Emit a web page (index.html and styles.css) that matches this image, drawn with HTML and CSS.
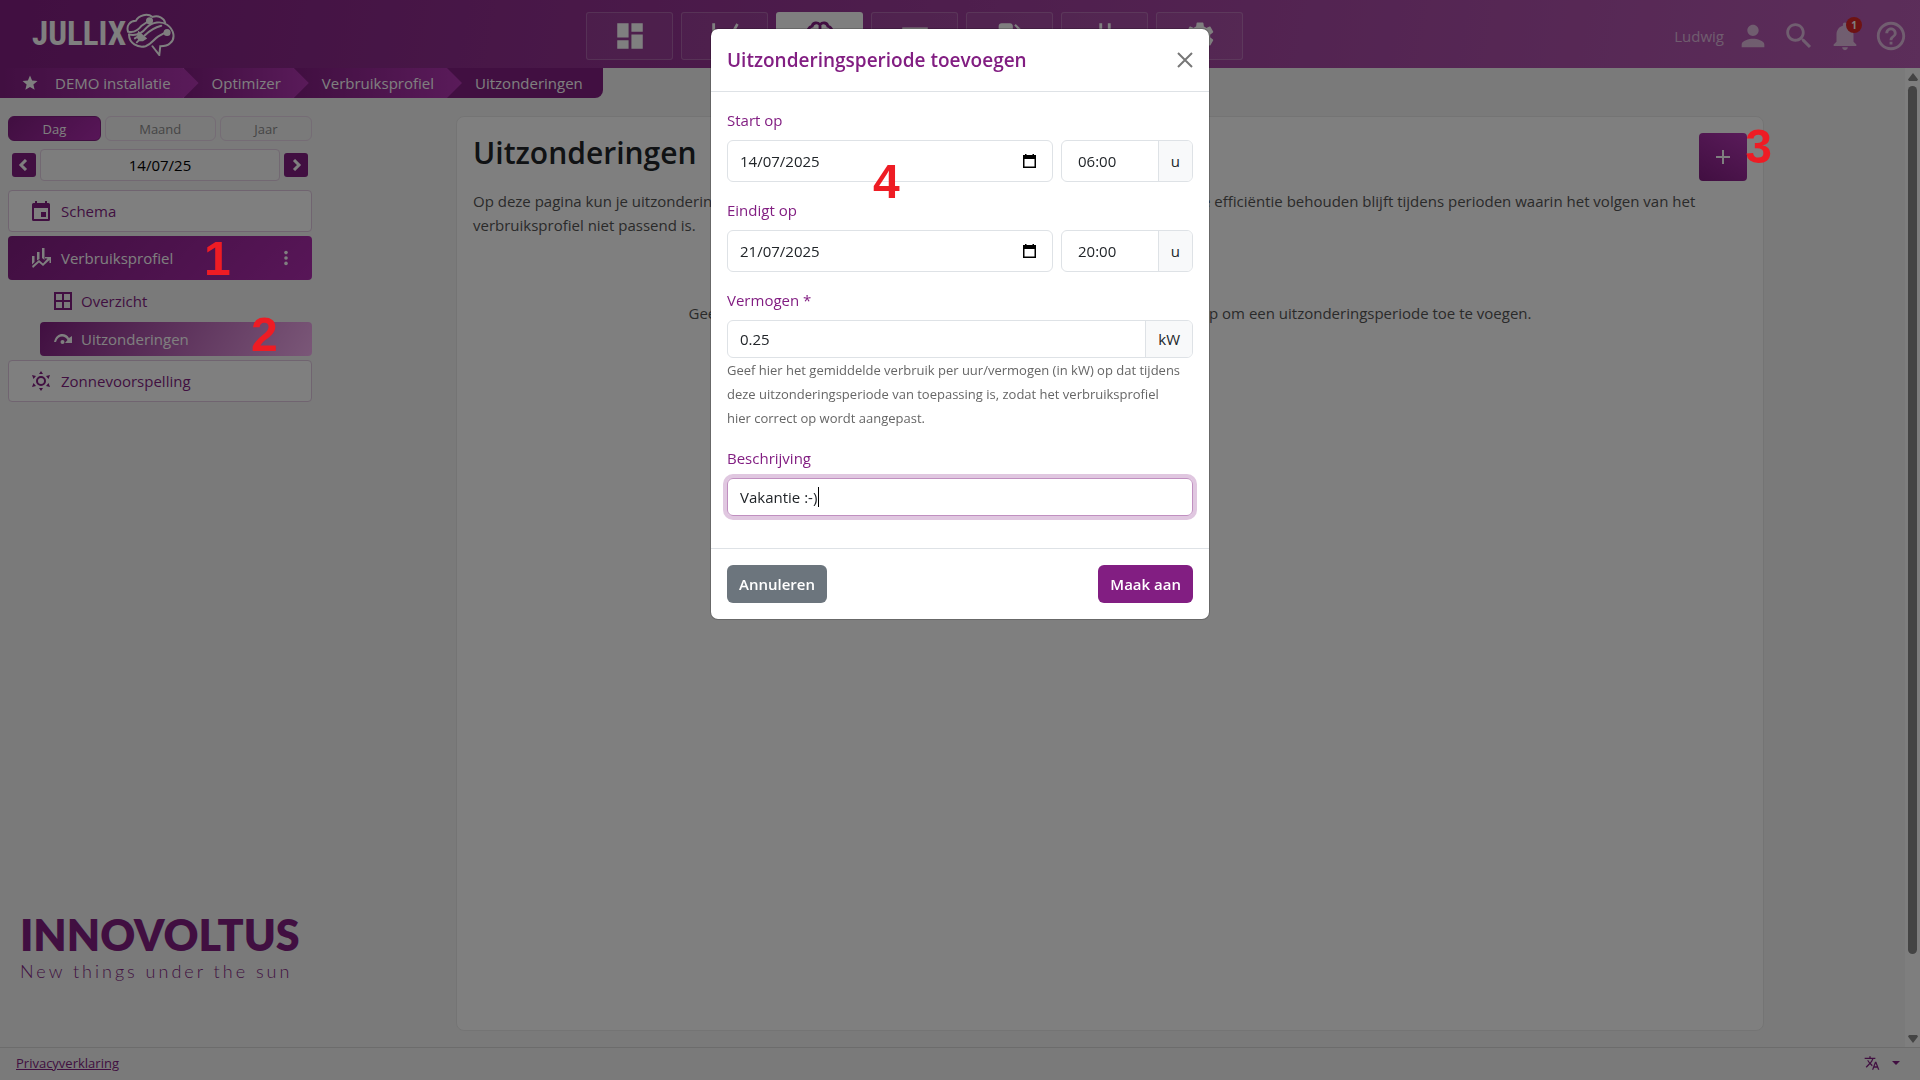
FILE: index.html
```html
<!DOCTYPE html>
<html lang="nl">
<head>
    <meta charset="UTF-8">
    <meta name="viewport" content="width=device-width, initial-scale=1.0">
    <title>Jullix - Uitzonderingen</title>
    <link rel="stylesheet" href="styles.css">
</head>
<body>
    <header class="topbar">
        <a class="logo" href="#" aria-label="Jullix">
            <span class="logo-text">JULLIX</span>
            <svg class="logo-brain" viewBox="0 0 50 44">
                <path d="M2 19C0 13 4 8 10 8C13 2 22 0 27 4C33 2 39 5 40 10"/>
                <path d="M2 19C8 21 12 18 16 13L22 9"/>
                <path d="M3 22C12 24 17 20 21 15C27 9 36 8 42 12C49 17 51 26 45 31C42 34 38 34 35 34L34 43L27 34"/>
                <path d="M3 22C3 31 12 36 20 34C26 32 28 27 33 24L40 20"/>
                <path d="M36 13C28 15 24 18 19 23"/>
                <circle cx="24" cy="8" r="2.6" fill="currentColor"/>
                <circle cx="42" cy="20" r="2.6" fill="currentColor"/>
                <path d="M13 20L20 26L17 28L14 28L12 25Z" fill="currentColor"/>
                <path d="M12 24L9 26M14 27L11 30"/>
            </svg>
        </a>
        <nav class="main-nav">
            <a class="nav-item" href="#" aria-label="Dashboard">
                <svg viewBox="0 0 24 24"><path d="M3 13h8V3H3v10zm0 8h8v-6H3v6zm10 0h8V11h-8v10zm0-18v6h8V3h-8z"/></svg>
            </a>
            <a class="nav-item" href="#" aria-label="Grafieken">
                <svg viewBox="0 0 24 24"><path d="M3 3h2v16h16v2H3zM6 15l5-6 4 3 5-9 1.600 1-6 11-4.500-3.500L7.500 17z"/></svg>
            </a>
            <a class="nav-item active" href="#" aria-label="Optimizer">
                <svg viewBox="0 0 24 24" class="line"><path d="M12 4C10 2 7 2.500 6.500 5C4 5.500 3 8 4 10C2 12 3 15 5 16C5 19 8 21 12 19C16 21 19 19 19 16C21 15 22 12 20 10C21 8 20 5.500 17.500 5C17 2.500 14 2 12 4zM12 4v15M8 8c2 0 2 2 4 2M16 8c-2 0-2 2-4 2"/></svg>
            </a>
            <a class="nav-item" href="#" aria-label="Batterij">
                <svg viewBox="0 0 24 24"><path d="M3 6h18v2H3zM3 11h18v8H3z"/></svg>
            </a>
            <a class="nav-item" href="#" aria-label="Laadpaal">
                <svg viewBox="0 0 24 24"><path d="M19.770 7.230l.01-.01-3.720-3.720L15 4.560l2.110 2.110c-.94.36-1.610 1.260-1.610 2.330 0 1.380 1.120 2.500 2.500 2.500.36 0 .69-.08 1-.21v7.210c0 .55-.45 1-1 1s-1-.45-1-1V14c0-1.100-.9-2-2-2h-1V5c0-1.100-.9-2-2-2H6c-1.100 0-2 .9-2 2v16h10v-7.500h1.500v5c0 1.380 1.120 2.500 2.500 2.500s2.500-1.120 2.500-2.500V9c0-.69-.28-1.320-.73-1.770z"/></svg>
            </a>
            <a class="nav-item" href="#" aria-label="Stekkers">
                <svg viewBox="0 0 24 24"><path d="M16.010 7L16 3h-2v4h-4V3H8v4h-.01C7 6.990 6 7.990 6 8.990v5.490L9.500 18v3h5v-3l3.500-3.510v-5.500c0-1-1-2-1.990-1.990z"/></svg>
            </a>
            <a class="nav-item" href="#" aria-label="Instellingen">
                <svg viewBox="0 0 24 24"><path d="M19.140 12.940c.04-.3.06-.61.06-.94 0-.32-.02-.64-.07-.94l2.030-1.580c.18-.14.23-.41.12-.61l-1.920-3.320c-.12-.22-.37-.29-.59-.22l-2.390.96c-.5-.38-1.030-.7-1.620-.94l-.36-2.540c-.04-.24-.24-.41-.48-.41h-3.840c-.24 0-.43.17-.47.41l-.36 2.540c-.59.24-1.130.57-1.620.94l-2.390-.96c-.22-.08-.47 0-.59.22L2.740 8.870c-.12.21-.08.47.12.61l2.030 1.580c-.05.3-.09.63-.09.94s.02.64.07.94l-2.030 1.580c-.18.14-.23.41-.12.61l1.920 3.320c.12.22.37.29.59.22l2.390-.96c.5.38 1.030.7 1.620.94l.36 2.540c.05.24.24.41.48.41h3.840c.24 0 .44-.17.47-.41l.36-2.540c.59-.24 1.130-.56 1.620-.94l2.390.96c.22.08.47 0 .59-.22l1.920-3.320c.12-.22.07-.47-.12-.61l-2.010-1.580zM12 15.600c-1.980 0-3.600-1.620-3.600-3.600s1.620-3.600 3.600-3.600 3.600 1.620 3.600 3.600-1.620 3.600-3.600 3.600z"/></svg>
            </a>
        </nav>
        <div class="user-menu">
            <span class="user-name">Ludwig</span>
            <a href="#" aria-label="Profiel"><svg viewBox="0 0 24 24"><path d="M12 12c2.210 0 4-1.790 4-4s-1.790-4-4-4-4 1.790-4 4 1.790 4 4 4zm0 2c-2.670 0-8 1.340-8 4v2h16v-2c0-2.660-5.330-4-8-4z"/></svg></a>
            <a href="#" aria-label="Zoeken"><svg viewBox="0 0 24 24"><path d="M15.500 14h-.79l-.28-.27C15.410 12.590 16 11.110 16 9.500 16 5.910 13.090 3 9.500 3S3 5.910 3 9.500 5.910 16 9.500 16c1.610 0 3.090-.59 4.230-1.570l.27.28v.79l5 4.990L20.490 19l-4.990-5zm-6 0C7.010 14 5 11.990 5 9.500S7.010 5 9.500 5 14 7.010 14 9.500 11.990 14 9.500 14z"/></svg></a>
            <a class="bell" href="#" aria-label="Meldingen"><svg viewBox="0 0 24 24"><path d="M12 22c1.100 0 2-.9 2-2h-4c0 1.100.89 2 2 2zm6-6v-5c0-3.070-1.640-5.640-4.500-6.320V4c0-.83-.67-1.500-1.500-1.500s-1.500.67-1.500 1.500v.68C7.630 5.360 6 7.920 6 11v5l-2 2v1h16v-1l-2-2z"/></svg><span class="badge">1</span></a>
            <a href="#" aria-label="Help"><svg viewBox="0 0 24 24"><path d="M11 18h2v-2h-2v2zm1-16C6.480 2 2 6.480 2 12s4.480 10 10 10 10-4.480 10-10S17.520 2 12 2zm0 18c-4.410 0-8-3.590-8-8s3.590-8 8-8 8 3.590 8 8-3.590 8-8 8zm0-14c-2.210 0-4 1.790-4 4h2c0-1.100.9-2 2-2s2 .9 2 2c0 2-3 1.750-3 5h2c0-2.250 3-2.500 3-5 0-2.210-1.790-4-4-4z"/></svg></a>
        </div>
    </header>

    <div class="content">
        <div class="page">
            <nav class="breadcrumb">
                <a href="#"><svg viewBox="0 0 24 24"><path d="M12 17.270L18.180 21l-1.640-7.030L22 9.240l-7.190-.61L12 2 9.190 8.630 2 9.240l5.460 4.730L5.820 21z"/></svg>DEMO installatie</a>
                <a href="#">Optimizer</a>
                <a href="#">Verbruiksprofiel</a>
                <a href="#">Uitzonderingen</a>
            </nav>

            <div class="columns">
                <aside class="sidebar">
                    <div class="range">
                        <button type="button" class="active">Dag</button>
                        <button type="button">Maand</button>
                        <button type="button">Jaar</button>
                    </div>
                    <div class="date-row">
                        <button type="button" aria-label="Vorige dag"><svg viewBox="0 0 12 12"><path d="M8 1L3 6l5 5"/></svg></button>
                        <input type="text" value="14/07/25" aria-label="Datum">
                        <button type="button" aria-label="Volgende dag"><svg viewBox="0 0 12 12"><path d="M4 1l5 5-5 5"/></svg></button>
                    </div>
                    <nav class="side-nav">
                        <a class="side-item" href="#">
                            <svg viewBox="0 0 20 20"><path d="M4 0h2v2h8V0h2v2h1.500A1.500 1.500 0 0 1 19 3.500v15a1.500 1.500 0 0 1-1.500 1.500h-15A1.500 1.500 0 0 1 1 18.500v-15A1.500 1.500 0 0 1 2.500 2H4zM3 7v11h14V7zM10 11h5v5h-5z" fill-rule="evenodd"/></svg>
                            Schema
                        </a>
                        <a class="side-item active" href="#">
                            <svg viewBox="0 0 20 20"><path d="M1 8h2.500v6L1 16.500zM6 4h2.500v7L6 12.500zM11 0h2.500v12L11 10zM1 18l7-6 4 3.500 4.500-5H14V9h6v6h-1.500v-3L12 18l-4-3.500L2 20z"/></svg>
                            Verbruiksprofiel
                            <svg class="dots" viewBox="0 0 20 20"><circle cx="10" cy="4" r="2"/><circle cx="10" cy="10" r="2"/><circle cx="10" cy="16" r="2"/></svg>
                        </a>
                        <a class="side-item sub" href="#">
                            <svg viewBox="0 0 20 20" class="line"><path d="M2 2h16v16H2zM10 2v16M2 10h16"/></svg>
                            Overzicht
                        </a>
                        <a class="side-item sub active" href="#">
                            <svg viewBox="0 0 20 20"><path d="M1 13C3 3 13 3 16 9l3-2v7h-7l2.500-3C12 6 5 6 3 13z"/><circle cx="9.500" cy="13" r="2"/></svg>
                            Uitzonderingen
                        </a>
                        <a class="side-item" href="#">
                            <svg viewBox="0 0 20 20"><circle cx="10" cy="10" r="4" fill="none" stroke="currentColor" stroke-width="2"/><path d="M10 0l2 3H8zM10 20l-2-3h4zM1 4l4 1-2.500 3zM19 4l-1.500 4L15 5zM1 16l1.500-4L5 15zM19 16l-4-1 2.500-3z"/></svg>
                            Zonnevoorspelling
                        </a>
                    </nav>
                    <div class="brand">
                        <div class="brand-name">INNOVOLTUS</div>
                        <div class="brand-tag">New things under the sun</div>
                    </div>
                </aside>

                <main class="card">
                    <div class="card-head">
                        <h1>Uitzonderingen</h1>
                        <button type="button" class="add" aria-label="Toevoegen"><svg viewBox="0 0 14 14"><path d="M7 0v14M0 7h14"/></svg></button>
                    </div>
                    <p class="intro">Op deze pagina kun je uitzonderingsperioden toevoegen aan je verbruiksprofiel, zodat in dat geval ook de efficiëntie behouden blijft tijdens perioden waarin het volgen van het verbruiksprofiel niet passend is.</p>
                    <p class="empty">Geen uitzonderingsperioden gevonden. Klik rechts bovenin op de plus-knop om een uitzonderingsperiode toe te voegen.</p>
                </main>
            </div>
        </div>
        <div class="scrollbar">
            <svg viewBox="0 0 10 8"><path d="M5 0l5 6.500L9 8H1L0 6.500z"/></svg>
            <div class="track"><div class="thumb"></div></div>
            <svg viewBox="0 0 10 8"><path d="M5 8L0 1.500 1 0h8l1 1.500z"/></svg>
        </div>
    </div>

    <footer class="footer">
        <a href="#">Privacyverklaring</a>
        <button type="button" class="language" aria-label="Taal">
            <svg viewBox="0 0 24 24"><path d="M12.870 15.070l-2.540-2.510.03-.03c1.740-1.940 2.980-4.170 3.710-6.530H17V4h-7V2H8v2H1v1.990h11.170C11.500 7.920 10.440 9.750 9 11.350 8.070 10.320 7.300 9.190 6.690 8h-2c.73 1.630 1.730 3.170 2.980 4.560l-5.090 5.020L4 19l5-5 3.110 3.110.76-2.040zM18.500 10h-2L12 22h2l1.120-3h4.750L21 22h2l-4.500-12zm-2.620 7l1.620-4.330L19.120 17h-3.240z"/></svg>
            <span class="caret"></span>
        </button>
    </footer>

    <div class="backdrop"></div>

    <div class="modal" role="dialog" aria-labelledby="modalTitle">
        <form id="periodForm">
            <div class="modal-header">
                <h2 id="modalTitle">Uitzonderingsperiode toevoegen</h2>
                <button type="button" class="close" aria-label="Sluiten"><svg viewBox="0 0 16 16"><path d="M1 1l14 14M15 1L1 15"/></svg></button>
            </div>
            <div class="modal-body">
                <div class="field">
                    <label for="startDate">Start op</label>
                    <div class="field-row">
                        <div class="date-box">
                            <input type="text" id="startDate" value="14/07/2025">
                            <button type="button" aria-label="Kies startdatum"><svg viewBox="0 0 13 14"><path d="M2 0h1.500v1h6V0H11v1h2v13H0V1h2zM1.500 5v7.500h10V5z" fill-rule="evenodd"/></svg></button>
                        </div>
                        <div class="input-group time">
                            <input type="text" id="startTime" value="06:00" aria-label="Startuur">
                            <span>u</span>
                        </div>
                    </div>
                </div>
                <div class="field">
                    <label for="endDate">Eindigt op</label>
                    <div class="field-row">
                        <div class="date-box">
                            <input type="text" id="endDate" value="21/07/2025">
                            <button type="button" aria-label="Kies einddatum"><svg viewBox="0 0 13 14"><path d="M2 0h1.500v1h6V0H11v1h2v13H0V1h2zM1.500 5v7.500h10V5z" fill-rule="evenodd"/></svg></button>
                        </div>
                        <div class="input-group time">
                            <input type="text" id="endTime" value="20:00" aria-label="Einduur">
                            <span>u</span>
                        </div>
                    </div>
                </div>
                <div class="field">
                    <label for="power">Vermogen *</label>
                    <div class="input-group">
                        <input type="text" id="power" value="0.25">
                        <span>kW</span>
                    </div>
                    <p class="help">Geef hier het gemiddelde verbruik per uur/vermogen (in kW) op dat tijdens deze uitzonderingsperiode van toepassing is, zodat het verbruiksprofiel hier correct op wordt aangepast.</p>
                </div>
                <div class="field">
                    <label for="description">Beschrijving</label>
                    <div class="input-group focused">
                        <input type="text" id="description" value="Vakantie :-)">
                        <i class="cursor"></i>
                    </div>
                </div>
            </div>
            <div class="modal-footer">
                <button type="button" class="btn btn-grey">Annuleren</button>
                <button type="submit" class="btn btn-purple">Maak aan</button>
            </div>
        </form>
    </div>

    <!-- Numbered steps -->
    <span class="step step-1">1</span>
    <span class="step step-2">2</span>
    <span class="step step-3">3</span>
    <span class="step step-4">4</span>
</body>
</html>
```

FILE: styles.css
```css
* {
    box-sizing: border-box;
}
body {
    font-family: "Segoe UI", "Open Sans", sans-serif;
    font-size: 15px;
    line-height: 24px;
    margin: 0;
    min-height: 100vh;
    display: flex;
    flex-direction: column;
    position: relative;
    color: #212529;
    background-color: #f4f4f4;
}
a {
    color: inherit;
    text-decoration: none;
}
button, input {
    font: inherit;
    color: inherit;
}
button {
    padding: 0;
    border: none;
    background: none;
    cursor: pointer;
}
svg {
    display: block;
    fill: currentColor;
}
svg.line {
    fill: none;
    stroke: currentColor;
    stroke-width: 2;
}

/* Top bar */
.topbar {
    display: flex;
    justify-content: space-between;
    align-items: center;
    height: 68px;
    padding: 0 12px 0 32px;
    color: #fff;
    background: linear-gradient(100deg, #821e82, #b85cb4);
}
.logo {
    display: flex;
    align-items: center;
}
.logo-text {
    font-family: "Liberation Sans Narrow", "Roboto Condensed", Roboto, sans-serif;
    font-size: 33px;
    font-weight: bold;
}
.logo-brain {
    width: 49px;
    height: 43px;
    fill: none;
    stroke: currentColor;
    stroke-width: 2;
    stroke-linecap: round;
}
.main-nav {
    display: flex;
    gap: 8px;
    padding-top: 4px;
}
.nav-item {
    display: flex;
    align-items: center;
    justify-content: center;
    width: 87px;
    height: 48px;
    border: 1px solid rgba(255, 255, 255, 0.2);
    border-radius: 3px;
    background-color: rgba(255, 255, 255, 0.06);
}
.nav-item.active {
    background-color: #fff;
    color: #821e82;
}
.nav-item svg {
    width: 34px;
    height: 34px;
}
.user-menu {
    display: flex;
    align-items: center;
    gap: 12px;
    padding-top: 4px;
    padding-left: 20px;
    color: rgba(255, 255, 255, 0.6);
}
.user-menu svg {
    width: 34px;
    height: 34px;
}
.bell {
    position: relative;
}
.badge {
    position: absolute;
    top: -2px;
    left: 18px;
    width: 16px;
    height: 16px;
    border-radius: 50%;
    font-size: 10px;
    font-weight: bold;
    line-height: 16px;
    text-align: center;
    color: #fff;
    background-color: #dc2626;
}

/* Page */
.content {
    display: flex;
    flex: 1;
}
.page {
    display: flex;
    flex-direction: column;
    flex: 1;
}
.breadcrumb {
    display: flex;
    align-self: flex-start;
    border-bottom-right-radius: 8px;
    overflow: hidden;
    isolation: isolate;
    color: #fff;
}
.breadcrumb a {
    display: flex;
    align-items: center;
    gap: 16px;
    position: relative;
    height: 30px;
    margin-right: -15px;
    padding: 0 28px;
    background: linear-gradient(90deg, #821e82, #b436b4);
    clip-path: polygon(0 0, calc(100% - 15px) 0, 100% 50%, calc(100% - 15px) 100%, 0 100%);
}
.breadcrumb a:nth-child(1) {
    z-index: 3;
    padding-left: 21px;
}
.breadcrumb a:nth-child(2) {
    z-index: 2;
}
.breadcrumb a:nth-child(3) {
    z-index: 1;
}
.breadcrumb a:last-child {
    margin-right: 0;
    padding-right: 20px;
    background: #821e82;
    clip-path: none;
}
.breadcrumb svg {
    width: 18px;
    height: 18px;
}
.columns {
    display: flex;
    flex: 1;
    gap: 8px;
    padding: 18px 5px 16px 8px;
}

/* Sidebar */
.sidebar {
    display: flex;
    flex-direction: column;
    width: 304px;
    color: #821e82;
}
.range {
    display: flex;
    gap: 4px;
}
.range button {
    flex: 1 1 auto;
    height: 25px;
    border: 1px solid #ead8ea;
    border-radius: 6px;
    font-size: 13px;
    line-height: 20px;
    color: #8c8c8c;
}
.range .active {
    border-color: #821e82;
    color: #fff;
    background: linear-gradient(135deg, #821e82, #b02cb0);
}
.date-row {
    display: flex;
    align-items: center;
    gap: 4px;
    padding: 8px 4px 9px;
}
.date-row button {
    display: flex;
    align-items: center;
    justify-content: center;
    width: 24px;
    height: 24px;
    border-radius: 3px;
    color: #fff;
    background-color: #821e82;
}
.date-row svg {
    width: 12px;
    height: 12px;
    fill: none;
    stroke: currentColor;
    stroke-width: 3;
}
.date-row input {
    flex: 1;
    min-width: 0;
    height: 32px;
    border: 1px solid #e4d0e4;
    border-radius: 4px;
    text-align: center;
    color: #000;
    background-color: #fafafa;
}
.side-nav {
    display: flex;
    flex-direction: column;
    gap: 4px;
}
.side-item {
    display: flex;
    align-items: center;
    gap: 10px;
    height: 42px;
    padding: 0 17px 0 22px;
    border: 1px solid #e0c8e0;
    border-radius: 4px;
    background-color: #fff;
}
.side-item svg {
    width: 20px;
    height: 20px;
}
.side-item .dots {
    width: 18px;
    height: 18px;
    margin-left: auto;
}
.side-item.active {
    height: 44px;
    border: none;
    padding-left: 23px;
    color: #fff;
    background: linear-gradient(135deg, #821e82, #b02cb0);
}
.side-item.sub {
    height: 34px;
    margin-left: 32px;
    padding-left: 13px;
    border: none;
    gap: 8px;
    background: none;
}
.side-item.sub.active {
    background: linear-gradient(120deg, #821e82, #f5aff0);
}
.brand {
    margin-top: auto;
    padding: 0 12px 48px;
}
.brand-name {
    font-family: Lato, sans-serif;
    font-size: 43px;
    font-weight: 800;
    line-height: 48px;
}
.brand-tag {
    font-family: Lato, sans-serif;
    font-size: 18px;
    font-weight: 300;
    letter-spacing: 3px;
}

/* Card */
.card {
    flex: 1;
    max-width: 1308px;
    margin: 0 auto;
    padding: 16px;
    border: 1px solid #e9e9e9;
    border-radius: 8px;
    background-color: #fff;
}
.card-head {
    display: flex;
    justify-content: space-between;
    align-items: flex-start;
}
.card h1 {
    margin: 0;
    font-size: 30px;
    font-weight: 600;
    line-height: 40px;
}
.add {
    display: flex;
    align-items: center;
    justify-content: center;
    width: 48px;
    height: 48px;
    border-radius: 4px;
    color: #fff;
    background: linear-gradient(30deg, #821e82, #b436b4);
}
.add svg {
    width: 14px;
    height: 14px;
    stroke: currentColor;
    stroke-width: 2;
}
.intro {
    margin: 8px 0 64px;
    color: #555;
}
.empty {
    margin: 0;
    text-align: center;
    color: #555;
}

/* Scrollbar */
.scrollbar {
    display: flex;
    flex-direction: column;
    align-items: center;
    width: 15px;
    padding: 5px 0 4px;
    color: #888;
    background-color: #fcfcfc;
}
.scrollbar svg {
    width: 10px;
    height: 8px;
}
.track {
    flex: 1;
    padding: 5px 0;
}
.thumb {
    width: 9px;
    height: 92%;
    border-radius: 5px;
    background-color: #888;
}

.footer {
    display: flex;
    justify-content: space-between;
    align-items: center;
    height: 33px;
    padding: 0 20px 2px 16px;
    border-top: 1px solid #d8d8d8;
    font-size: 13px;
    color: #821e82;
}
.footer a {
    text-decoration: underline;
}
.language {
    display: flex;
    align-items: center;
    gap: 12px;
}
.language svg {
    width: 16px;
    height: 16px;
}
.caret {
    border: 4px solid transparent;
    border-top-color: currentColor;
    border-bottom: none;
}

/* Modal */
.backdrop {
    position: fixed;
    inset: 0;
    background-color: rgba(0, 0, 0, 0.5);
}
.modal {
    position: absolute;
    top: 28px;
    left: 0;
    right: 0;
    max-width: 500px;
    margin: 0 auto;
    border: 1px solid rgba(0, 0, 0, 0.175);
    border-radius: 8px;
    background-color: #fff;
    background-clip: padding-box;
}
.modal-header {
    display: flex;
    justify-content: space-between;
    align-items: center;
    height: 63px;
    padding: 0 16px;
    border-bottom: 1px solid #dee2e6;
}
.modal-header h2 {
    margin: 0;
    font-size: 19px;
    font-weight: 600;
    color: #821e82;
}
.close svg {
    width: 16px;
    height: 16px;
    stroke: #777;
    stroke-width: 2;
}
.modal-body {
    padding: 16px 16px 0;
}
.field {
    padding-bottom: 16px;
}
.field label {
    display: block;
    margin-bottom: 8px;
    color: #821e82;
}
.field-row {
    display: flex;
    gap: 8px;
}
.date-box, .input-group {
    display: flex;
    position: relative;
    flex: 1;
    height: 38px;
    border: 1px solid #dee2e6;
    border-radius: 6px;
}
.field-row > div {
    min-width: 0;
    height: 42px;
}
.date-box input, .input-group input {
    flex: 1;
    min-width: 0;
    padding: 0 12px;
    border: none;
    border-radius: 6px;
    outline: none;
    background: none;
}
.date-box button {
    padding: 0 16px;
}
.date-box svg {
    width: 13px;
    height: 14px;
    color: #000;
}
.input-group span {
    display: flex;
    align-items: center;
    padding: 0 12px;
    border-left: 1px solid #dee2e6;
    border-radius: 0 5px 5px 0;
    background-color: #f8f9fa;
}
.input-group.time {
    flex: 0 0 132px;
}
.input-group.time input {
    padding-left: 16px;
}
.input-group.focused {
    border-color: #c08fc0;
    box-shadow: 0 0 0 4px rgba(130, 30, 130, 0.25);
}
.cursor {
    position: absolute;
    top: 8px;
    left: 90px;
    width: 1px;
    height: 20px;
    background-color: #000;
}
.help {
    margin: 0;
    padding-right: 10px;
    font-size: 13px;
    color: #666;
}
.modal-footer {
    display: flex;
    justify-content: space-between;
    margin-top: 16px;
    padding: 16px;
    border-top: 1px solid #dee2e6;
}
.btn {
    height: 38px;
    padding: 0 12px;
    border-radius: 6px;
    font-weight: 600;
    color: #fff;
}
.btn-grey {
    background-color: #6c757d;
}
.btn-purple {
    background-color: #821e82;
}

/* Step numbers, drawn over everything */
.step {
    position: absolute;
    font-family: "Liberation Sans", Arial, sans-serif;
    font-size: 48px;
    font-weight: bold;
    line-height: 48px;
    color: #ee1c24;
}
.step-1 {
    top: 235px;
    left: 204px;
}
.step-2 {
    top: 311px;
    left: 251px;
}
.step-3 {
    top: 123px;
    right: 148px;
}
.step-4 {
    top: 158px;
    left: calc(50% - 87px);
}
```
